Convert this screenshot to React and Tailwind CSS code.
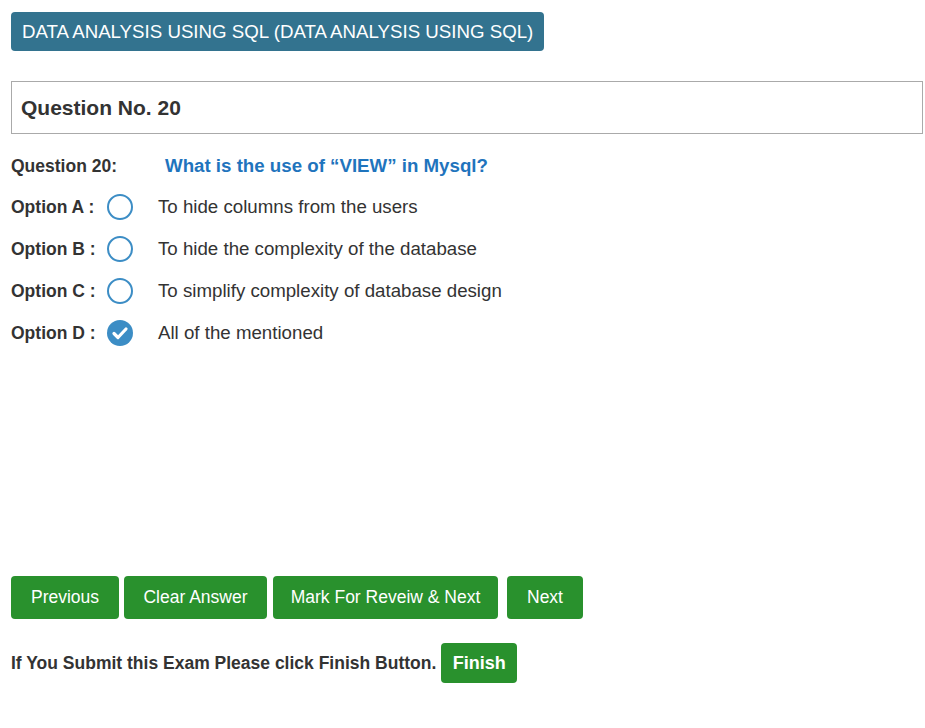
import React from 'react';

const options = [
  { label: 'Option A :', text: 'To hide columns from the users', checked: false },
  { label: 'Option B :', text: 'To hide the complexity of the database', checked: false },
  { label: 'Option C :', text: 'To simplify complexity of database design', checked: false },
  { label: 'Option D :', text: 'All of the mentioned', checked: true },
];

const Radio = ({ checked }) =>
  checked ? (
    <svg width="28" height="28" viewBox="0 0 28 28">
      <circle cx="14" cy="14" r="13" fill="#3c8dc5" />
      <path d="M8 14.5l4 4 8-8.5" fill="none" stroke="#fff" strokeWidth="3.2" strokeLinecap="round" strokeLinejoin="round" />
    </svg>
  ) : (
    <svg width="28" height="28" viewBox="0 0 28 28">
      <circle cx="14" cy="14" r="12" fill="#fff" stroke="#3c8dc5" strokeWidth="2" />
    </svg>
  );

const GreenButton = ({ children, className = '' }) => (
  <button className={`bg-[#29912d] text-white rounded-[4px] ${className}`}>{children}</button>
);

export default function App() {
  return (
    <div className="min-h-screen bg-white px-[11px] pt-[12px] text-[#333] font-['Liberation_Sans',Arial,sans-serif]">
      <div className="inline-block bg-[#33738f] text-white text-[18.7px] rounded-[4px] h-[39px] leading-[39px] px-[11px]">
        DATA ANALYSIS USING SQL (DATA ANALYSIS USING SQL)
      </div>

      <div className="mt-[30px] border border-[#aaa] h-[53px] flex items-center px-[9px] w-[912px]">
        <span className="font-bold text-[21px] text-[#333]">Question No. 20</span>
      </div>

      <div className="mt-[20px] flex items-center h-[24px]">
        <span className="font-bold text-[17.5px] w-[154px]">Question 20:</span>
        <span className="font-bold text-[18.7px] text-[#1f74bd]">What is the use of “VIEW” in Mysql?</span>
      </div>

      <div className="mt-[15px] flex flex-col gap-[14px]">
        {options.map((o) => (
          <div key={o.label} className="flex items-center h-[28px]">
            <span className="font-bold text-[17.5px] w-[95px]">{o.label}</span>
            <Radio checked={o.checked} />
            <span className="ml-[24px] text-[18.7px]">{o.text}</span>
          </div>
        ))}
      </div>

      <div className="mt-[229px] flex text-[17.5px]">
        <GreenButton className="h-[43px] w-[108px]">Previous</GreenButton>
        <GreenButton className="h-[43px] w-[143px] ml-[5px]">Clear Answer</GreenButton>
        <GreenButton className="h-[43px] w-[225px] ml-[6px]">Mark For Reveiw &amp; Next</GreenButton>
        <GreenButton className="h-[43px] w-[76px] ml-[9px]">Next</GreenButton>
      </div>

      <div className="mt-[24px] flex items-center">
        <span className="font-bold text-[17.5px]">If You Submit this Exam Please click Finish Button.</span>
        <GreenButton className="ml-[5px] h-[40px] w-[76px] font-bold text-[18px]">Finish</GreenButton>
      </div>
    </div>
  );
}
